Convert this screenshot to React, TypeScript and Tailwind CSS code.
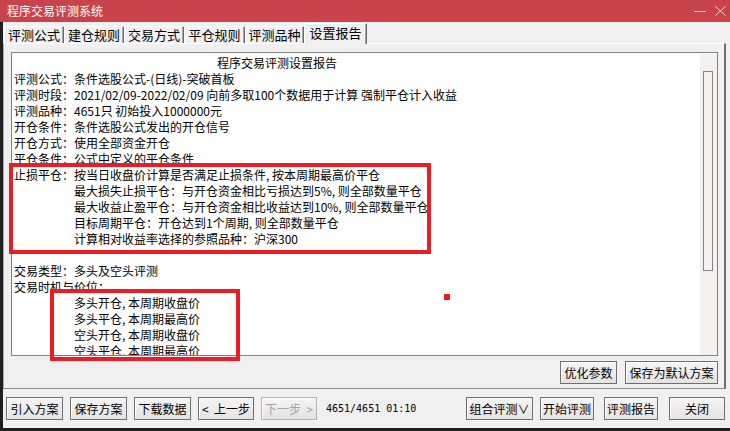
import clsx from 'clsx'

const tabs = [
  { label: '评测公式', w: 'w-[60px]' },
  { label: '建仓规则', w: 'w-[60px]' },
  { label: '交易方式', w: 'w-[60px]' },
  { label: '平仓规则', w: 'w-[61px]' },
  { label: '评测品种', w: 'w-[59px]' },
]

const lines: { text: string; indent?: boolean; title?: boolean }[] = [
  { text: '程序交易评测设置报告', title: true },
  { text: '评测公式：条件选股公式-(日线)-突破首板' },
  { text: '评测时段：2021/02/09-2022/02/09 向前多取100个数据用于计算 强制平仓计入收益' },
  { text: '评测品种：4651只 初始投入1000000元' },
  { text: '开仓条件：条件选股公式发出的开仓信号' },
  { text: '开仓方式：使用全部资金开仓' },
  { text: '平仓条件：公式中定义的平仓条件' },
  { text: '止损平仓：按当日收盘价计算是否满足止损条件, 按本周期最高价平仓' },
  { text: '最大损失止损平仓：与开仓资金相比亏损达到5%, 则全部数量平仓', indent: true },
  { text: '最大收益止盈平仓：与开仓资金相比收益达到10%, 则全部数量平仓', indent: true },
  { text: '目标周期平仓：开仓达到1个周期, 则全部数量平仓', indent: true },
  { text: '计算相对收益率选择的参照品种：沪深300', indent: true },
  { text: '' },
  { text: '交易类型：多头及空头评测' },
  { text: '交易时机与价位：' },
  { text: '多头开仓, 本周期收盘价', indent: true },
  { text: '多头平仓, 本周期最高价', indent: true },
  { text: '空头开仓, 本周期收盘价', indent: true },
  { text: '空头平仓, 本周期最高价', indent: true },
]

function Btn({ text, className, disabled }: { text: string; className?: string; disabled?: boolean }) {
  return (
    <div
      className={clsx(
        'h-[23px] flex items-center justify-center border text-[12px] bg-linear-to-b from-[#f5f5f5] to-[#e3e3e3] shadow-[inset_1px_1px_0_#ffffff] whitespace-pre',
        disabled ? 'border-[#b4b4b4] text-[#a3a3a3]' : 'border-[#6e6e6e] text-black',
        className
      )}
    >
      {text}
    </div>
  )
}

export default function App() {
  return (
    <div className="relative w-[730px] h-[431px] bg-[#f0f0f0] flex flex-col overflow-hidden font-['Noto_Sans_CJK_SC',sans-serif] text-black">
      {/* title bar */}
      <div className="h-[22px] shrink-0 bg-[#c9444a] flex items-center pl-[7px] text-white text-[12px]">
        <span>程序交易评测系统</span>
        <div className="ml-auto flex items-center gap-[9px] pr-[4px]">
          <svg width="12" height="10" viewBox="0 0 12 10">
            <path d="M0 5.5h12" stroke="#f3d6d8" strokeWidth="1" />
          </svg>
          <svg width="11" height="10" viewBox="0 0 11 10">
            <path d="M0.5 0.5l10 9M10.5 0.5l-10 9" stroke="#f3d6d8" strokeWidth="1" />
          </svg>
        </div>
      </div>

      <div className="flex-1 flex flex-col border-l-[3px] border-b-[3px] border-[#1f1f1f]">
        {/* tabs */}
        <div className="h-[21px] shrink-0 flex items-end pl-[1px]">
          {tabs.map((t) => (
            <div
              key={t.label}
              className={clsx(
                t.w,
                'h-[17px] flex items-center justify-center text-[13px] border-l border-t border-white border-r border-r-[#6b6b6b] shadow-[inset_-1px_0_0_#a9a9a9]'
              )}
            >
              {t.label}
            </div>
          ))}
          <div className="relative z-10 w-[63px] h-[21px] -mb-[1px] pb-[2px] bg-[#f0f0f0] flex items-center justify-center text-[13px] border-l border-t border-white border-r border-r-[#6b6b6b] shadow-[inset_-1px_0_0_#a9a9a9]">
            设置报告
          </div>
        </div>

        {/* panel */}
        <div className="w-[723px] h-[346px] shrink-0 border-t border-l border-t-white border-l-[#a8a8a8] border-r-2 border-r-[#6f6f6f] border-b border-b-[#8a8a8a] flex flex-col">
          <div className="ml-[7px] mt-[8px] w-[707px] h-[304px] border border-[#828282] bg-white flex overflow-hidden">
            <div className="flex-1 pl-[2px] pt-[2px] text-[12px] leading-[16px] whitespace-pre overflow-hidden">
              {lines.map((l, i) => (
                <div
                  key={i}
                  className={clsx('h-[16px]', l.indent && 'pl-[60px]', l.title && 'pl-[203px]')}
                >
                  {l.text}
                </div>
              ))}
            </div>
            <div className="w-[17px] mt-[1px] bg-[#f2f1f0] pt-[17px]">
              <div className="ml-[3px] w-[10px] h-[200px] border border-[#858585] bg-[#f4f3f2]" />
            </div>
          </div>
          <div className="mt-[5px] flex justify-end gap-[8px] pr-[6px]">
            <Btn text="优化参数" className="w-[57px]" />
            <Btn text="保存为默认方案" className="w-[93px]" />
          </div>
        </div>

        {/* bottom bar */}
        <div className="flex-1 flex items-start pt-[8px] pl-[3px]">
          <div className="flex gap-[7px]">
            <Btn text="引入方案" className="w-[57px]" />
            <Btn text="保存方案" className="w-[57px]" />
            <Btn text="下载数据" className="w-[57px]" />
            <Btn text="<  上一步" className="w-[56px]" />
            <Btn text="下一步  >" className="w-[56px]" disabled />
          </div>
          <div className="ml-[9px] h-[23px] flex items-center text-[10px] font-['DejaVu_Sans_Mono',monospace]">
            4651/4651 01:10
          </div>
          <Btn text="组合评测∨" className="ml-auto w-[67px]" />
          <Btn text="开始评测" className="ml-[7px] w-[54px]" />
          <Btn text="评测报告" className="ml-[10px] w-[54px]" />
          <Btn text="关闭" className="ml-[11px] mr-[5px] w-[56px]" />
        </div>
      </div>

      {/* red annotation marks */}
      <div className="absolute left-[9px] top-[163px] w-[422px] h-[91px] border-4 border-[#ed1c24]" />
      <div className="absolute left-[50px] top-[289px] w-[190px] h-[72px] border-4 border-[#ed1c24]" />
      <div className="absolute left-[444px] top-[294px] w-[6px] h-[6px] bg-[#ed1c24]" />
    </div>
  )
}
